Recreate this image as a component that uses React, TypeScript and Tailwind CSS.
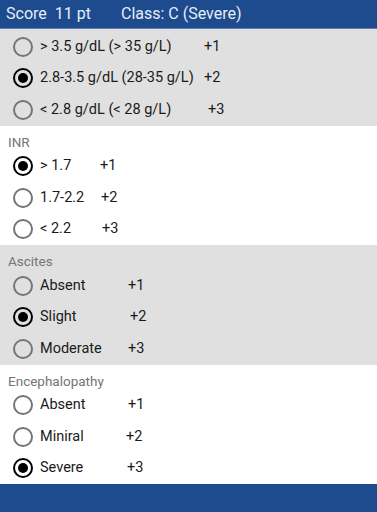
import React from 'react';

type Row = { label: string; pts: string; w: string; selected?: boolean };

const Radio = ({ selected }: { selected?: boolean }) =>
    selected ? (
        <span className="w-[20px] h-[20px] rounded-full border-2 border-black flex items-center justify-center shrink-0">
            <span className="w-[10px] h-[10px] rounded-full bg-black" />
        </span>
    ) : (
        <span className="w-[20px] h-[20px] rounded-full border-2 border-[#757575] shrink-0" />
    );

const Option = ({ row }: { row: Row }) => (
    <div className="h-[31.5px] flex items-center pl-[13px] text-[14.5px] text-[#1a1a1a]">
        <Radio selected={row.selected} />
        <span className={`ml-[7px] ${row.w}`}>{row.label}</span>
        <span>{row.pts}</span>
    </div>
);

const Section = ({ title, rows, gray }: { title?: string; rows: Row[]; gray?: boolean }) => (
    <div className={gray ? 'bg-[#e0e0e0]' : 'bg-white'}>
        {title && <div className="h-[25px] pl-[8px] pt-[8px] text-[13.5px] leading-[16px] text-[#757575]">{title}</div>}
        {rows.map((r) => (
            <Option key={r.label} row={r} />
        ))}
    </div>
);

export default function App() {
    return (
        <div className="w-[377px] h-[512px] flex flex-col bg-white overflow-hidden" style={{ fontFamily: 'Roboto, "Liberation Sans", sans-serif' }}>
            {/* Header */}
            <div className="h-[29px] shrink-0 bg-[#1d4b8e] border-b border-[#5b7fb3] flex items-center pl-[6px] text-[16px] text-[#e6edf7]">
                <span className="w-[115px]">Score&nbsp;&nbsp;11 pt</span>
                <span>Class: C (Severe)</span>
            </div>

            <div className="bg-[#e0e0e0] pt-[2px]">
                <Section
                    gray
                    rows={[
                        { label: '> 3.5 g/dL (> 35 g/L)', pts: '+1', w: 'w-[164px]' },
                        { label: '2.8-3.5 g/dL (28-35 g/L)', pts: '+2', w: 'w-[164px]', selected: true },
                        { label: '< 2.8 g/dL (< 28 g/L)', pts: '+3', w: 'w-[168px]' },
                    ]}
                />
            </div>

            <Section
                title="INR"
                rows={[
                    { label: '> 1.7', pts: '+1', w: 'w-[60px]', selected: true },
                    { label: '1.7-2.2', pts: '+2', w: 'w-[61px]' },
                    { label: '< 2.2', pts: '+3', w: 'w-[62px]' },
                ]}
            />

            <Section
                gray
                title="Ascites"
                rows={[
                    { label: 'Absent', pts: '+1', w: 'w-[88px]' },
                    { label: 'Slight', pts: '+2', w: 'w-[90px]', selected: true },
                    { label: 'Moderate', pts: '+3', w: 'w-[88px]' },
                ]}
            />

            <Section
                title="Encephalopathy"
                rows={[
                    { label: 'Absent', pts: '+1', w: 'w-[88px]' },
                    { label: 'Miniral', pts: '+2', w: 'w-[86px]' },
                    { label: 'Severe', pts: '+3', w: 'w-[87px]', selected: true },
                ]}
            />

            <div className="flex-1 bg-[#1d4b8e]" />
        </div>
    );
}
